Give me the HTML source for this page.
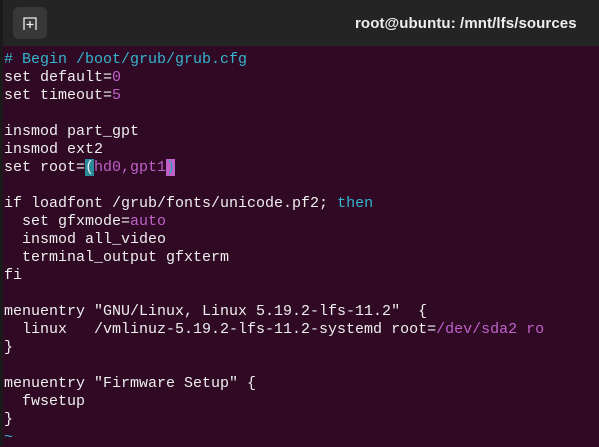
<html><head><style>
body{margin:0;width:599px;height:446px;overflow:hidden;background:#300a24;font-family:"Liberation Mono",monospace}
.tb{position:absolute;left:0;top:0;width:599px;height:46px;background:#242424;border-left:3px solid #1a1a1a;box-sizing:border-box}
.btn{position:absolute;left:10px;top:7px;width:34px;height:32px;border-radius:6px;background:#383838}
.title{position:absolute;left:352px;top:15px;color:#eee;font:bold 15px "Liberation Sans",sans-serif;white-space:nowrap;letter-spacing:0.1px}
pre{position:absolute;left:4px;top:51px;margin:0;color:#eee;font:15px/18px "Liberation Mono",monospace}
.c{color:#33b5d0}.p{color:#c061cb}.hc{background:#2a8a99;color:#eee}.hp{background:#c061cb;color:#2aa1b3}
.e{position:absolute;left:0;top:46px;width:3px;height:400px;background:#1a1a1a}
</style></head><body>
<div class="tb"><div class="btn"><svg width="34" height="32"><path d="M11 23V11h12v12M17 14v7M13.5 17.5h7" stroke="#eee" stroke-width="1.3" fill="none"/></svg></div><div class="title">root@ubuntu: /mnt/lfs/sources</div></div>
<div class="e"></div>
<pre><span class="c"># Begin /boot/grub/grub.cfg</span>
set default=<span class="p">0</span>
set timeout=<span class="p">5</span>

insmod part_gpt
insmod ext2
set root=<span class="hc">(</span><span class="p">hd0,gpt1</span><span class="hp">)</span>

if loadfont /grub/fonts/unicode.pf2; <span class="c">then</span>
  set gfxmode=<span class="p">auto</span>
  insmod all_video
  terminal_output gfxterm
fi

menuentry "GNU/Linux, Linux 5.19.2-lfs-11.2"  {
  linux   /vmlinuz-5.19.2-lfs-11.2-systemd root=<span class="p">/dev/sda2 ro</span>
}

menuentry "Firmware Setup" {
  fwsetup
}
<span class="c">~</span></pre>
</body></html>
